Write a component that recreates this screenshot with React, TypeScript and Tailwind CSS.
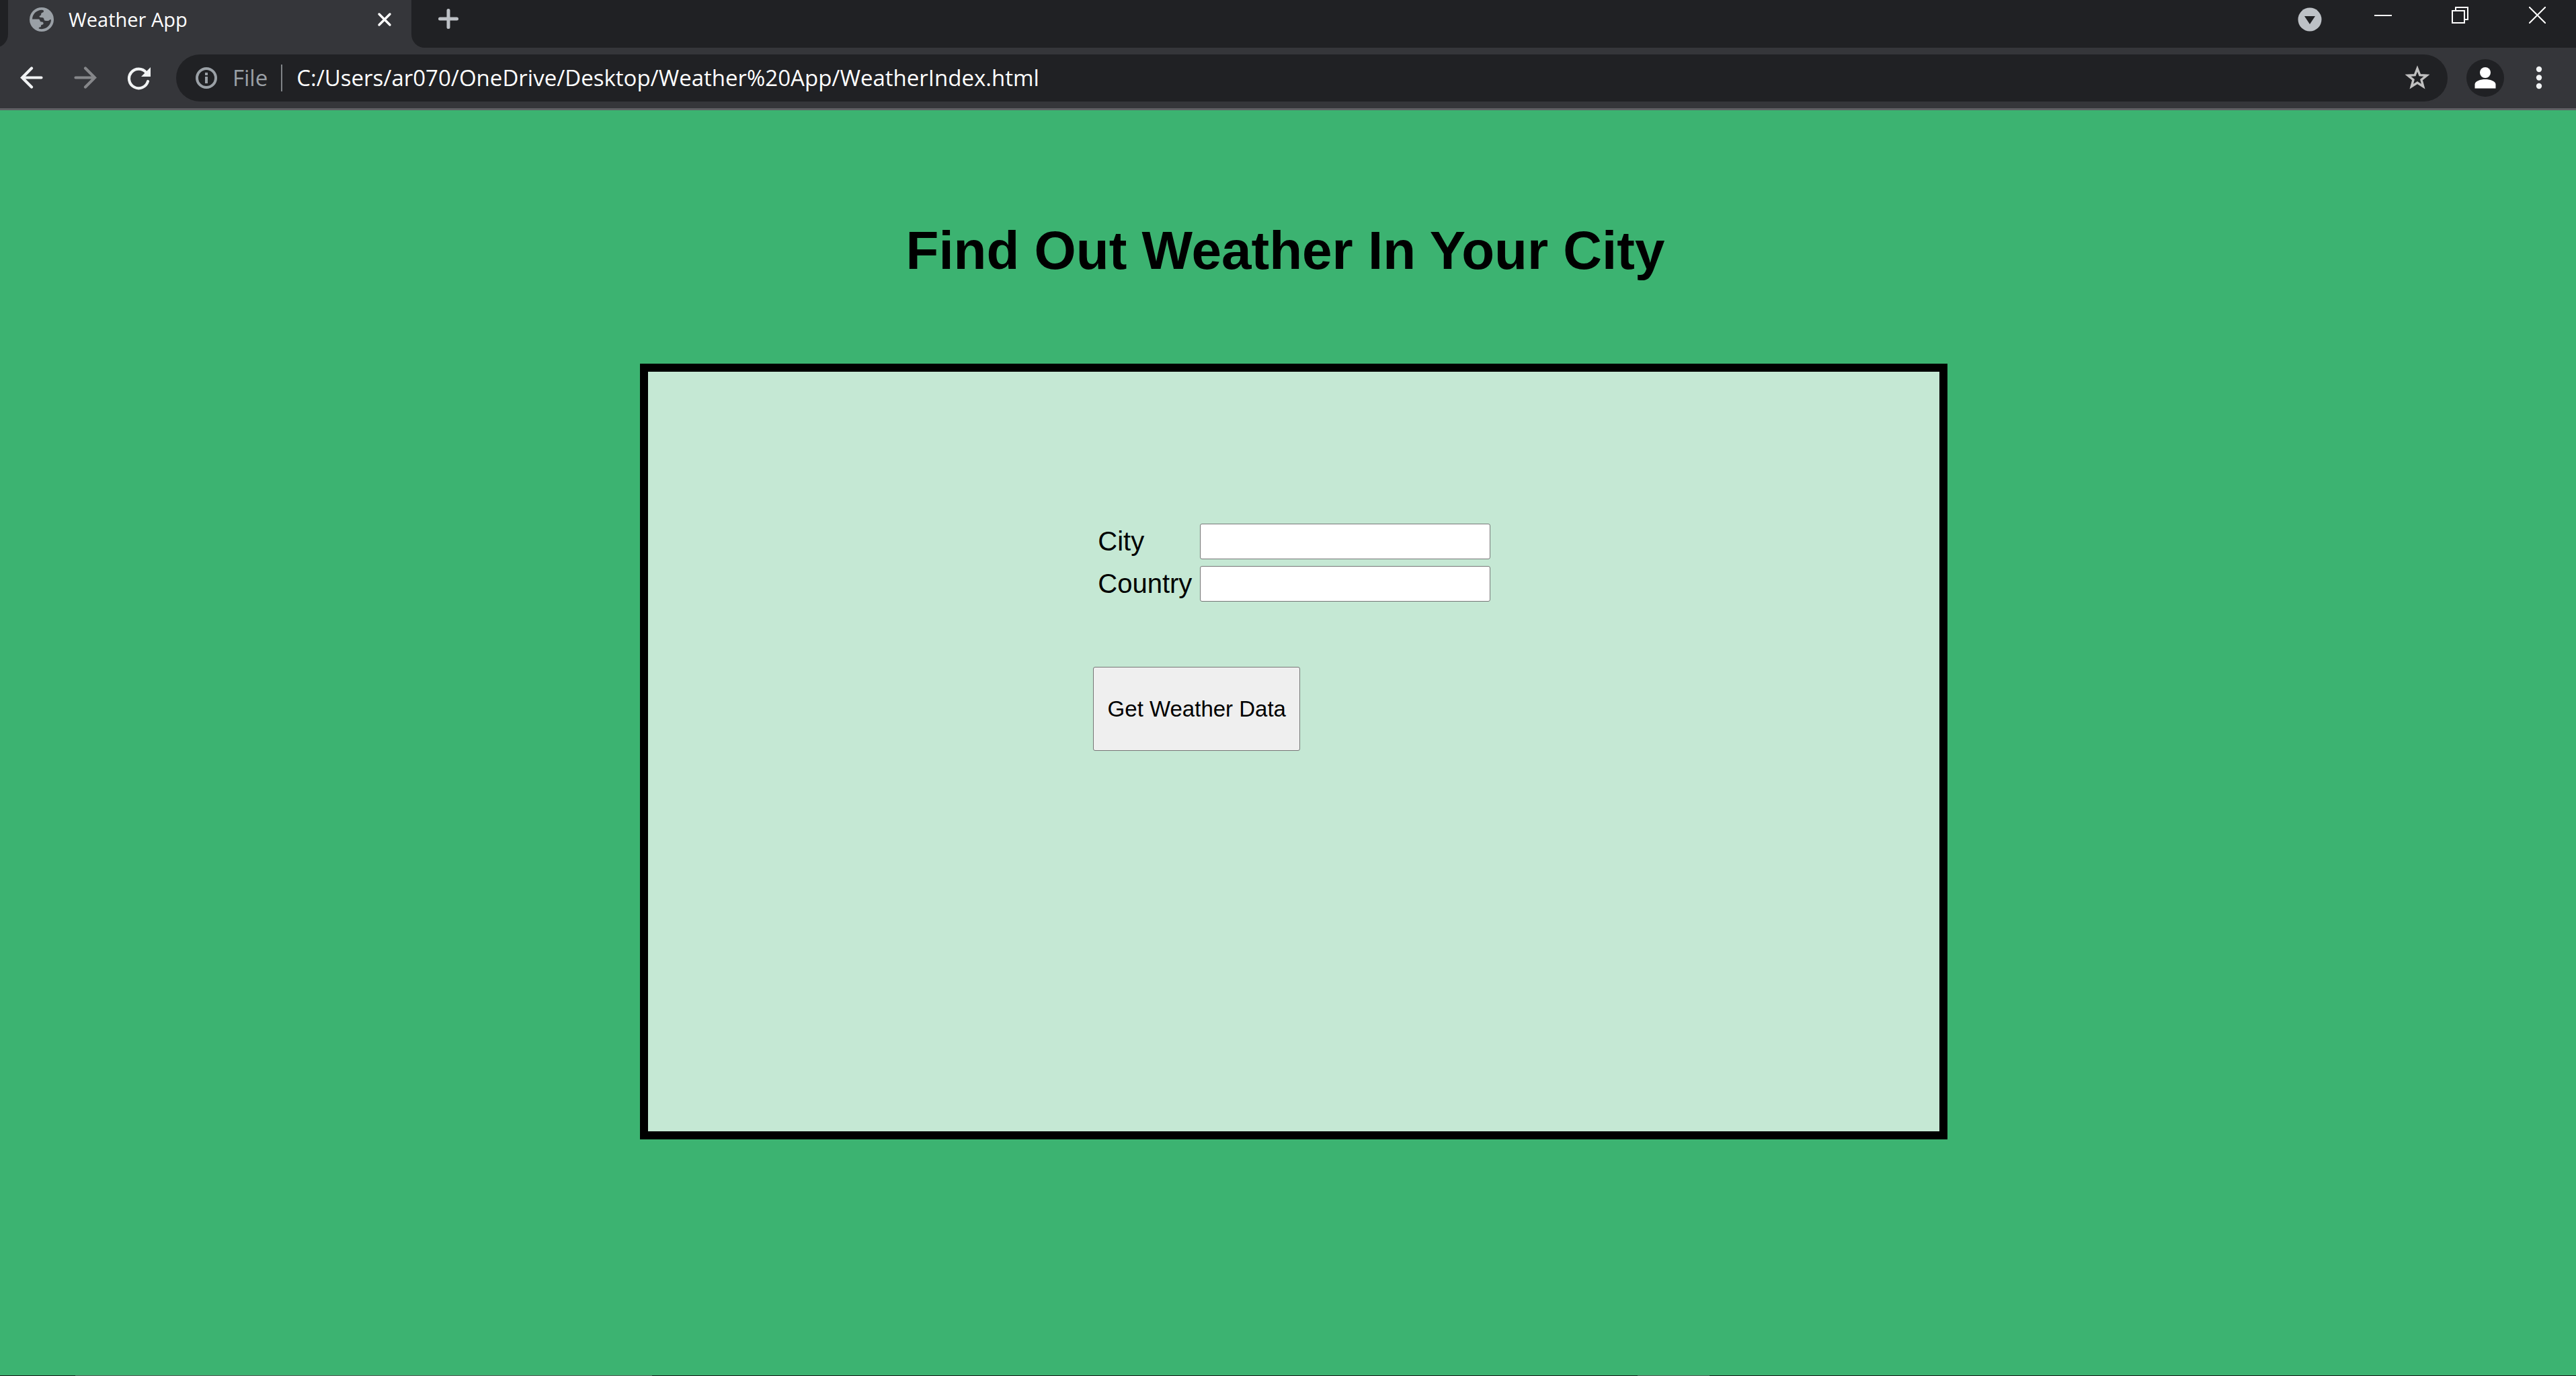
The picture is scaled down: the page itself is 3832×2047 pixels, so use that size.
import type { ReactNode } from "react";

function IconButton({ label, className, children }: { label: string; className: string; children: ReactNode }) {
  return (
    <button type="button" aria-label={label} className={`flex shrink-0 items-center justify-center ${className}`}>
      {children}
    </button>
  );
}

function GlobeIcon() {
  return (
    <svg viewBox="0 0 36 36" className="size-9 shrink-0" fill="none" aria-hidden="true">
      <circle cx="18" cy="18" r="18" fill="#9aa0a6" />
      <path
        d="M4 17.5C4.300 10 10 4 18.500 3.800c1.600 0 2.500.8 2.500 2 0 1.400-1 1.700-2.400 2.200-1.600.6-1.400 1.600-1.500 3-.1 1.300-2.600 1.200-2.600 2.600 0 1.500 1.600 1.300 3.600 1.300 2.400 0 3.300 1 3.400 2.900.1 1.500 1 2.200 2.800 2.200h3.200c1.500 0 1.700-1.500 3-1.800.8-.2 1.400-.1 1.500.6C31.500 26 26 32 18 32.200c-1.800 0-3.200-.3-4.200-.8-.4-.9.2-1.900 1.200-2 2-.1 2-1 2-2.400 0-1.500 3.500-1 3.600-3.100.1-2-1.300-2.500-3.100-2.500-1.600 0-2-1-2.200-2.200-.3-1.300-1.200-1.700-2.800-1.700z"
        fill="#35363a"
      />
    </svg>
  );
}

function TabStrip() {
  return (
    <div className="flex h-[71px] bg-[#35363a] text-white">
      <div className="-ml-3 w-6 shrink-0 rounded-br-[20px] bg-[#202124]" />
      <div className="flex h-[57px] w-[600px] shrink-0 items-center pl-8 pr-7">
        <GlobeIcon />
        <span className="ml-[22px] flex-1 text-[29px] leading-10">Weather App</span>
        <IconButton label="Close tab" className="size-6">
          <svg viewBox="0 0 24 24" className="size-6" stroke="#fff" strokeWidth="3.4" strokeLinecap="round">
            <path d="M4 4l16 16M20 4L4 20" />
          </svg>
        </IconButton>
      </div>
      <div className="flex flex-1 items-start justify-between rounded-bl-[20px] bg-[#202124]">
        <IconButton label="New tab" className="ml-9 h-14 w-[38px]">
          <svg viewBox="0 0 30 30" className="size-[30px]" stroke="#bdc1c6" strokeWidth="5" strokeLinecap="round">
            <path d="M15 2.500v25M2.500 15h25" />
          </svg>
        </IconButton>
        <div className="flex">
          <IconButton label="Search tabs" className="mr-4 h-[57px] w-[72px]">
            <svg viewBox="0 0 36 36" className="size-9">
              <circle cx="18" cy="18" r="17.500" fill="#bdc1c6" />
              <path d="M10 13h16l-8 12z" fill="#202124" />
            </svg>
          </IconButton>
          <IconButton label="Minimize" className="h-[45px] w-[114px]">
            <svg viewBox="0 0 26 26" className="size-[26px]">
              <path d="M0 12h26v2H0z" fill="#fff" />
            </svg>
          </IconButton>
          <IconButton label="Restore" className="h-[45px] w-[114px]">
            <svg viewBox="0 0 25 25" className="size-[25px]" fill="none" stroke="#fff" strokeWidth="2">
              <path d="M1 6h18v18H1zM6 6V1h18v18h-5" />
            </svg>
          </IconButton>
          <IconButton label="Close window" className="h-[45px] w-[116px]">
            <svg viewBox="0 0 25 25" className="size-[25px]" stroke="#fff" strokeWidth="2">
              <path d="M0 0l25 25M25 0L0 25" />
            </svg>
          </IconButton>
        </div>
      </div>
    </div>
  );
}

function Toolbar() {
  return (
    <div className="flex h-[93px] items-center border-b-[3px] border-[#5f6164] bg-[#35363a]">
      <div className="flex w-[262px] shrink-0 pl-[7px]">
        <IconButton label="Back" className="size-20">
          <svg viewBox="0 0 34 34" className="size-[34px]" fill="none" stroke="#f1f3f4" strokeWidth="4.200" strokeLinecap="round">
            <path d="M17 2.500L3 16.500l14 14M3 16.500h28.500" />
          </svg>
        </IconButton>
        <IconButton label="Forward" className="size-20">
          <svg viewBox="0 0 34 34" className="size-[34px]" fill="none" stroke="#86878a" strokeWidth="4.200" strokeLinecap="round">
            <path d="M17 2.500l14 14-14 14M31 16.500H2.500" />
          </svg>
        </IconButton>
        <IconButton label="Reload" className="size-20">
          <svg viewBox="0 0 36 36" className="size-9" fill="none">
            <path d="M28.500 10A14.300 14.300 0 1 0 31 23" stroke="#f1f3f4" strokeWidth="4.200" strokeLinecap="round" />
            <path d="M35 2v14H21z" fill="#f1f3f4" />
          </svg>
        </IconButton>
      </div>
      <div className="flex h-[70px] flex-1 items-center rounded-full bg-[#202124] pl-7 pr-6">
        <svg viewBox="0 0 34 34" className="size-[34px] shrink-0" fill="none" aria-hidden="true">
          <circle cx="17" cy="17" r="14" stroke="#9aa0a6" strokeWidth="4" />
          <path d="M15 9h4v4h-4zM15 15h4v10h-4z" fill="#9aa0a6" />
        </svg>
        <span className="ml-[22px] text-[33px] leading-10 text-[#9aa0a6]">File</span>
        <span className="ml-5 h-10 w-[2px] shrink-0 bg-[#808488]" />
        <input
          type="text"
          aria-label="Address"
          defaultValue="C:/Users/ar070/OneDrive/Desktop/Weather%20App/WeatherIndex.html"
          className="ml-[21px] h-12 min-w-0 flex-1 bg-transparent text-[33px] text-white outline-none"
        />
        <IconButton label="Bookmark this tab" className="size-[42px]">
          <svg viewBox="0 0 38 38" className="size-[38px]" fill="none">
            <path
              d="M19 5l3.700 9.700 10.300.5-8 6.500 2.700 10L19 26l-8.700 5.700 2.700-10-8-6.500 10.300-.5z"
              stroke="#c0c0c0"
              strokeWidth="3.400"
            />
          </svg>
        </IconButton>
      </div>
      <IconButton label="Profile" className="ml-7 size-[56px] rounded-full bg-[#202124]">
        <svg viewBox="0 0 32 32" className="size-8" fill="#fff">
          <circle cx="16" cy="8" r="8" />
          <path d="M0.500 31.500v-6C0.500 20.500 9 18 16 18s15.500 2.500 15.500 7.500v6z" />
        </svg>
      </IconButton>
      <IconButton label="Menu" className="ml-6 mr-[27px] h-14 w-[56px]">
        <svg viewBox="0 0 10 36" className="h-9 w-[10px]" fill="#f1f3f4">
          <circle cx="5" cy="5" r="4.200" />
          <circle cx="5" cy="17.500" r="4.200" />
          <circle cx="5" cy="30" r="4.200" />
        </svg>
      </IconButton>
    </div>
  );
}

function Field({ id, label }: { id: string; label: string }) {
  return (
    <>
      <label htmlFor={id} className="pb-[2px] text-[40px] leading-[50px]">
        {label}
      </label>
      <input id={id} type="text" className="h-[53px] w-[432px] rounded-[3px] border border-[#767676] bg-white px-1 text-[33px]" />
    </>
  );
}

export default function App() {
  return (
    <div className="flex min-h-screen flex-col bg-[#3cb371] font-['Liberation_Sans',Arial,sans-serif] text-black">
      <header className="font-['Open_Sans','Noto_Sans',sans-serif]">
        <TabStrip />
        <Toolbar />
      </header>
      <main className="flex-1">
        <h1 className="pr-2 pt-[163px] text-center text-[80px] font-bold leading-[92px]">Find Out Weather In Your City</h1>
        <div className="mt-[122px] grid grid-cols-[952fr_1945fr_935fr]">
          <form className="col-start-2 min-h-[1154px] border-[12px] border-black bg-white/70 pl-[34%] pt-[226px]">
            <div className="grid grid-cols-[142px_max-content] items-center gap-x-[10px] gap-y-[10px] pl-2">
              <Field id="city" label="City" />
              <Field id="country" label="Country" />
            </div>
            <button type="button" className="ml-px mt-[97px] h-[125px] w-[308px] rounded-[3px] border border-[#767676] bg-[#efefef] text-[33px]">
              Get Weather Data
            </button>
          </form>
        </div>
      </main>
      <footer className="flex h-px bg-[#1c1c1c]">
        <div className="ml-[112px] h-px w-[858px] bg-[#5c5c5c]" />
        <div className="ml-[1466px] h-px w-[107px] bg-[#5c5c5c]" />
      </footer>
    </div>
  );
}
